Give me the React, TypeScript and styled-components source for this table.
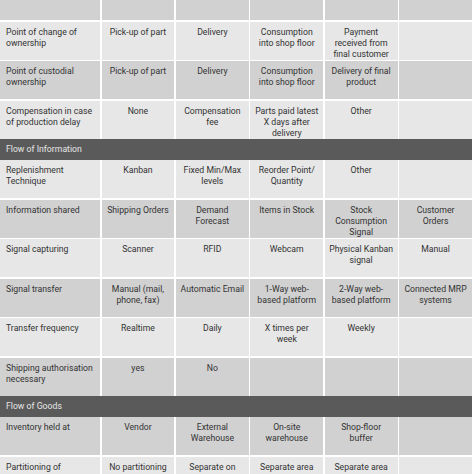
import React from 'react';
import styled, { createGlobalStyle } from 'styled-components';

const GlobalStyle = createGlobalStyle`
	html, body {
		margin: 0;
		padding: 0;
		background: #fff;
		overflow: hidden;
	}
	body {
		font-family: Roboto, 'Liberation Sans', sans-serif;
	}
`;

type Tone = 'light' | 'dark';

interface Section {
	title?: string;
	rows: { tone: Tone; cells: string[] }[];
}

const sections: Section[] = [
	{
		rows: [
			{ tone: 'dark', cells: ['', '', '', '', '', ''] },
			{
				tone: 'light',
				cells: [
					'Point of change of\nownership',
					'Pick-up of part',
					'Delivery',
					'Consumption\ninto shop floor',
					'Payment\nreceived from\nfinal customer',
					'',
				],
			},
			{
				tone: 'dark',
				cells: [
					'Point of custodial\nownership',
					'Pick-up of part',
					'Delivery',
					'Consumption\ninto shop floor',
					'Delivery of final\nproduct',
					'',
				],
			},
			{
				tone: 'light',
				cells: [
					'Compensation in case\nof production delay',
					'None',
					'Compensation\nfee',
					'Parts paid latest\nX days after\ndelivery',
					'Other',
					'',
				],
			},
		],
	},
	{
		title: 'Flow of Information',
		rows: [
			{
				tone: 'light',
				cells: ['Replenishment\nTechnique', 'Kanban', 'Fixed Min/Max\nlevels', 'Reorder Point/\nQuantity', 'Other', ''],
			},
			{
				tone: 'dark',
				cells: [
					'Information shared',
					'Shipping Orders',
					'Demand\nForecast',
					'Items in Stock',
					'Stock\nConsumption\nSignal',
					'Customer\nOrders',
				],
			},
			{
				tone: 'light',
				cells: ['Signal capturing', 'Scanner', 'RFID', 'Webcam', 'Physical Kanban\nsignal', 'Manual'],
			},
			{
				tone: 'dark',
				cells: [
					'Signal transfer',
					'Manual (mail,\nphone, fax)',
					'Automatic Email',
					'1-Way web-\nbased platform',
					'2-Way web-\nbased platform',
					'Connected MRP\nsystems',
				],
			},
			{
				tone: 'light',
				cells: ['Transfer frequency', 'Realtime', 'Daily', 'X times per\nweek', 'Weekly', ''],
			},
			{
				tone: 'dark',
				cells: ['Shipping authorisation\nnecessary', 'yes', 'No', '', '', ''],
			},
		],
	},
	{
		title: 'Flow of Goods',
		rows: [
			{
				tone: 'dark',
				cells: ['Inventory held at', 'Vendor', 'External\nWarehouse', 'On-site\nwarehouse', 'Shop-floor\nbuffer', ''],
			},
			{
				tone: 'light',
				cells: [
					'Partitioning of\nwarehouse',
					'No partitioning',
					'Separate on\nwarehouse',
					'Separate area\nin warehouse',
					'Separate area\nat line',
					'',
				],
			},
		],
	},
];

const Table = styled.div`
	width: 472px;
	display: grid;
	grid-template-columns: 100px repeat(5, 1fr);
	column-gap: 1.5px;
	row-gap: 1.5px;
	background: #fff;
`;

const Cell = styled.div<{ $tone: Tone; $first: boolean; $top: boolean }>`
	height: ${(p) => (p.$top ? '20px' : '38px')};
	background: ${(p) => (p.$tone === 'dark' ? '#d1d1d1' : '#e7e7e7')};
	color: #333;
	font-size: 8.7px;
	line-height: 11px;
	padding: ${(p) => (p.$first ? '5px 3px 0 6px' : '5px 2px 0')};
	box-sizing: border-box;
	text-align: ${(p) => (p.$first ? 'left' : 'center')};
	white-space: pre-line;
	overflow: hidden;
`;

const SectionHead = styled.div`
	grid-column: 1 / -1;
	height: 21.5px;
	margin: -1.5px 0;
	background: #5a5a5a;
	color: #e6e6e6;
	font-size: 8.7px;
	line-height: 21.5px;
	padding-left: 6px;
`;

export default function App() {
	return (
		<>
			<GlobalStyle />
			<Table>
				{sections.map((s, si) => (
					<React.Fragment key={si}>
						{s.title && <SectionHead>{s.title}</SectionHead>}
						{s.rows.map((r, ri) =>
							r.cells.map((c, ci) => (
								<Cell
									key={`${ri}-${ci}`}
									$tone={r.tone}
									$first={ci === 0}
									$top={si === 0 && ri === 0}
								>
									{c}
								</Cell>
							))
						)}
					</React.Fragment>
				))}
			</Table>
		</>
	);
}
